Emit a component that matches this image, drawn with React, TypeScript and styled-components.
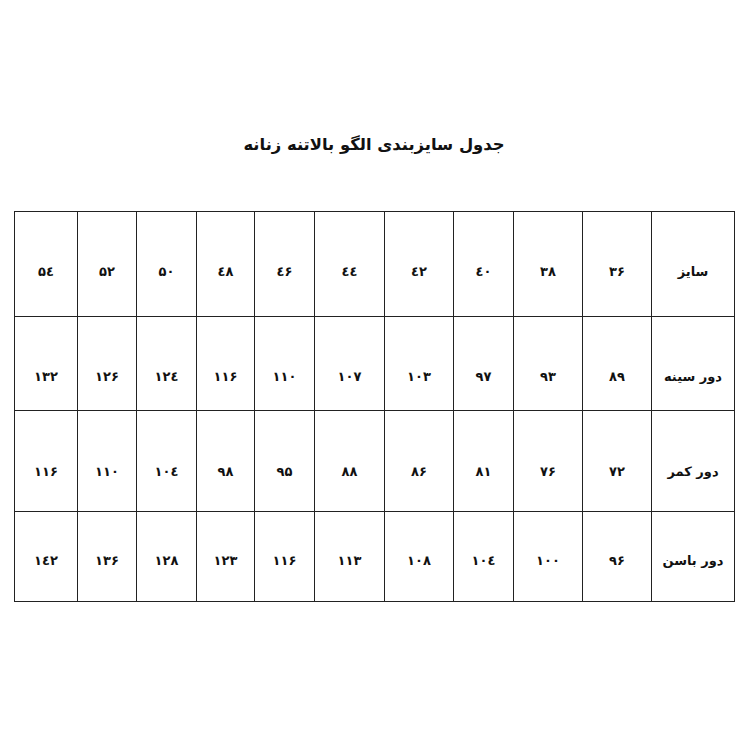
import React from "react";
import styled, { createGlobalStyle } from "styled-components";

const Global = createGlobalStyle`
  html, body { margin: 0; padding: 0; background: #ffffff; }
  body { font-family: "DejaVu Sans", sans-serif; color: #111; }
`;

const Page = styled.div`
  width: 750px;
  height: 750px;
  box-sizing: border-box;
  padding: 133px 16px 0 14px;
  display: flex;
  flex-direction: column;
  align-items: stretch;
`;

const Title = styled.h1`
  margin: 0 0 54px 0;
  height: 24px;
  line-height: 24px;
  text-align: center;
  font-family: "DejaVu Sans", sans-serif;
  font-size: 16.4px;
  font-weight: bold;
  color: #111;
  direction: rtl;
`;

const Table = styled.table`
  direction: rtl;
  border-collapse: collapse;
  width: 721px;
  table-layout: fixed;
`;

const Row = styled.tr<{ $h: number }>`
  height: ${(p) => p.$h}px;
`;

const Cell = styled.td<{ $pt: number }>`
  border: 1px solid #222;
  padding: ${(p) => p.$pt}px 0 0 0;
  text-align: center;
  vertical-align: middle;
  font-family: "DejaVu Sans", sans-serif;
  font-size: 13px;
  font-weight: bold;
  color: #111;
  white-space: nowrap;
`;

const widths = [83, 69, 69, 60, 69, 70, 60, 58, 60, 59, 63];

const rows: { h: number; pt: number; cells: string[] }[] = [
  { h: 105, pt: 14, cells: ["سایز", "۳۶", "۳۸", "٤۰", "٤۲", "٤٤", "٤۶", "٤۸", "۵۰", "۵۲", "۵٤"] },
  { h: 94, pt: 26, cells: ["دور سینه", "۸۹", "۹۳", "۹۷", "۱۰۳", "۱۰۷", "۱۱۰", "۱۱۶", "۱۲٤", "۱۲۶", "۱۳۲"] },
  { h: 101, pt: 20, cells: ["دور کمر", "۷۲", "۷۶", "۸۱", "۸۶", "۸۸", "۹۵", "۹۸", "۱۰٤", "۱۱۰", "۱۱۶"] },
  { h: 90, pt: 8, cells: ["دور باسن", "۹۶", "۱۰۰", "۱۰٤", "۱۰۸", "۱۱۳", "۱۱۶", "۱۲۳", "۱۲۸", "۱۳۶", "۱٤۲"] },
];

export default function App() {
  return (
    <>
      <Global />
      <Page>
        <Title>جدول سایزبندی الگو بالاتنه زنانه</Title>
        <Table>
          <colgroup>
            {widths.map((w, i) => (
              <col key={i} style={{ width: w }} />
            ))}
          </colgroup>
          <tbody>
            {rows.map((r, i) => (
              <Row key={i} $h={r.h}>
                {r.cells.map((c, j) => (
                  <Cell key={j} $pt={r.pt}>
                    {c}
                  </Cell>
                ))}
              </Row>
            ))}
          </tbody>
        </Table>
      </Page>
    </>
  );
}
